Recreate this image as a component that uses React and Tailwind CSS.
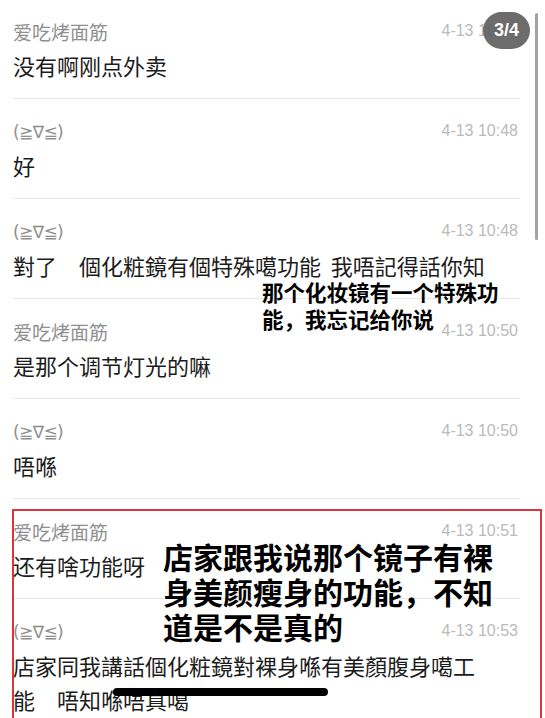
import React from "react";

const messages = [
  { name: "爱吃烤面筋", time: "4-13 10:47", text: "没有啊刚点外卖" },
  { name: "(≧∇≦)", time: "4-13 10:48", text: "好" },
  { name: "(≧∇≦)", time: "4-13 10:48", text: "對了　個化粧鏡有個特殊噶功能  我唔記得話你知" },
  { name: "爱吃烤面筋", time: "4-13 10:50", text: "是那个调节灯光的嘛" },
  { name: "(≧∇≦)", time: "4-13 10:50", text: "唔喺" },
  { name: "爱吃烤面筋", time: "4-13 10:51", text: "还有啥功能呀" },
  {
    name: "(≧∇≦)",
    time: "4-13 10:53",
    text: "店家同我講話個化粧鏡對裸身喺有美顏腹身噶工\n能　唔知喺唔真噶",
  },
];

const cjk = "font-['Noto_Sans_CJK_SC','Noto_Sans_CJK_TC',sans-serif]";

function Row({ name, time, text }) {
  // kaomoji names are narrower in the original, so give them a latin font
  const isKaomoji = name.startsWith("(");
  return (
    <div className="pt-[19px] pb-[16px] border-b border-[#e8e8e8]">
      <div className="flex items-center justify-between h-[28px]">
        {isKaomoji ? (
          <span className="font-['DejaVu_Sans',sans-serif] text-[17px] tracking-[-0.6px] leading-[28px] text-[#8f8f8f]">
            {name}
          </span>
        ) : (
          <span className={`${cjk} text-[19px] leading-[28px] text-[#8f8f8f]`}>{name}</span>
        )}
        <span className="font-['Liberation_Sans',sans-serif] text-[16px] text-[#bababa] pr-[2px] -mt-[3px]">
          {time}
        </span>
      </div>
      <p className={`${cjk} mt-[2px] text-[22px] leading-[34px] text-[#1c1c1c] whitespace-pre-wrap`}>
        {text}
      </p>
    </div>
  );
}

export default function App() {
  return (
    <div className="relative w-[545px] h-[718px] overflow-hidden bg-white">
      {/* chat list */}
      <div className="-mt-[1px] ml-[13px] w-[507px]">
        {messages.map((m, i) => (
          <Row key={i} {...m} />
        ))}
      </div>

      {/* scrollbar */}
      <div className="absolute left-[535px] top-[13px] w-[3px] h-[227px] rounded-full bg-[#a3a3a3]" />

      {/* page badge */}
      <div className="absolute left-[483px] top-[12px] w-[47px] h-[37px] rounded-full bg-[#5c5c5c]/90 flex items-center justify-center">
        <span className="font-['Liberation_Sans',sans-serif] font-bold text-[18px] text-white">3/4</span>
      </div>

      {/* annotation: small caption */}
      <div className={`${cjk} absolute left-[262px] top-[278px] font-bold text-[21.5px] leading-[27px] text-black`}>
        那个化妆镜有一个特殊功
        <br />
        能，我忘记给你说
      </div>

      {/* red highlight box */}
      <div className="absolute left-[12px] top-[509px] w-[530px] h-[240px] border-2 border-[#d6363c]" />

      {/* annotation: big caption */}
      <div className={`${cjk} absolute left-[163px] top-[539px] font-bold text-[30px] leading-[35px] text-black`}>
        店家跟我说那个镜子有裸
        <br />
        身美颜瘦身的功能，不知
        <br />
        道是不是真的
      </div>

      {/* home indicator */}
      <div className="absolute left-[113px] top-[688px] w-[215px] h-[8px] rounded-full bg-black" />
    </div>
  );
}
